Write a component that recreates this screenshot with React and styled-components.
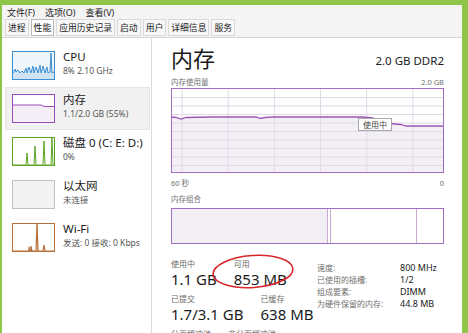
import { styled, createGlobalStyle } from "styled-components";

const GlobalStyle = createGlobalStyle`
  html, body {
    margin: 0;
    padding: 0;
    overflow: hidden;
    background: #8fc64a;
  }
  body {
    font-family: "Noto Sans", "Noto Sans CJK SC", sans-serif;
    color: #1e1e1e;
  }
`;

const MENUS = ["文件(F)", "选项(O)", "查看(V)"];
const TABS = ["进程", "性能", "应用历史记录", "启动", "用户", "详细信息", "服务"];

// little graphs shown in the sidebar
const cpuLine =
  "0,21 2,17 3,20 5,18 7,21 9,19 11,21 13,16 14,21 16,15 18,21 20,14 21,21 23,15 25,21 27,13 28,21 30,14 32,21 34,15 35,21 37,20 38,1 39,21 41,20";
const diskLine =
  "0,27 13,27 14,15 15,27 21,27 22,8 23,27 30,27 31,3 32,27 38,27 39,0 40,27 41,27";
const wifiLine =
  "0,27 16,27 16,23 17,27 18,27 18,22 19,27 23,27 24,0 25,27 30,27 31,21 32,27 41,27";
const memLine = "0,10 28,10 30,11 32,11.5 41,11.5";

const SIDE_ITEMS = [
  { name: "CPU", sub: "8% 2.10 GHz", color: "#3d8fd1", fill: "#eef5fb", kind: "cpu" },
  { name: "内存", sub: "1.1/2.0 GB (55%)", color: "#9a4cb8", fill: "#ffffff", kind: "mem", active: true },
  { name: "磁盘 0 (C: E: D:)", sub: "0%", color: "#5ca524", fill: "#ffffff", kind: "disk" },
  { name: "以太网", sub: "未连接", color: "#c2c2c2", fill: "#f3f3f3", kind: "eth" },
  { name: "Wi-Fi", sub: "发送: 0 接收: 0 Kbps", color: "#b7703a", fill: "#ffffff", kind: "wifi" },
];

const Thumbnail = ({ kind, color }) => (
  <svg width="41" height="27" viewBox="0 0 41 27">
    {kind === "cpu" && (
      <>
        <polygon points={`0,27 ${cpuLine} 41,27`} fill="#cfe3f4" />
        <polyline points={cpuLine} fill="none" stroke={color} strokeWidth="1" />
      </>
    )}
    {kind === "mem" && (
      <>
        <polygon points={`0,27 ${memLine} 41,27`} fill="#f4eef7" />
        <polyline points={memLine} fill="none" stroke={color} strokeWidth="1" />
      </>
    )}
    {kind === "disk" && (
      <polyline points={diskLine} fill="none" stroke={color} strokeWidth="1" />
    )}
    {kind === "wifi" && (
      <>
        <line x1="24" y1="0" x2="24" y2="27" stroke="#e3c3aa" strokeWidth="1" />
        <polyline points={wifiLine} fill="none" stroke={color} strokeWidth="1.2" />
      </>
    )}
  </svg>
);

// memory usage graph, 272 x 85
const usageLine =
  "0,28 4,28.5 9,30 14,28.5 40,28 84,28 88,29.5 93,28.5 100,28 190,28 200,29 212,34 222,35 228,35.5 233,37 272,37";

const UsageGraph = () => {
  const cols = [10, 56, 102, 148, 194, 240];
  const rows = [8.5, 17, 25.5, 34, 42.5, 51, 59.5, 68, 76.5];
  return (
    <svg width="100%" height="100%" viewBox="0 0 270 83" preserveAspectRatio="none">
      <polygon points={`0,83 ${usageLine} 272,83`} fill="#f3f0f5" />
      {cols.map((x) => (
        <line key={x} x1={x} y1="0" x2={x} y2="83" stroke="#e2d8e7" strokeWidth="1" />
      ))}
      {rows.map((y) => (
        <line key={y} x1="0" y1={y} x2="272" y2={y} stroke="#e2d8e7" strokeWidth="1" />
      ))}
      <polyline points={usageLine} fill="none" stroke="#9b58b9" strokeWidth="1.3" />
    </svg>
  );
};

const App = () => {
  return (
    <>
      <GlobalStyle />
      <Frame>
        <Window>
          <MenuBar>
            {MENUS.map((m) => (
              <MenuItem key={m}>{m}</MenuItem>
            ))}
          </MenuBar>
          <TabBar>
            {TABS.map((t) => (
              <Tab key={t} $active={t === "性能"}>
                {t}
              </Tab>
            ))}
          </TabBar>
          <Body>
            <Sidebar>
              {SIDE_ITEMS.map((item) => (
                <SideItem key={item.name} $active={item.active}>
                  <Thumb $color={item.color} $fill={item.fill}>
                    <Thumbnail kind={item.kind} color={item.color} />
                  </Thumb>
                  <SideText>
                    <SideName>{item.name}</SideName>
                    <SideSub>{item.sub}</SideSub>
                  </SideText>
                </SideItem>
              ))}
            </Sidebar>
            <Main>
              <Header>
                <Title>内存</Title>
                <Spec>2.0 GB DDR2</Spec>
              </Header>
              <Caption>
                <span>内存使用量</span>
                <span>2.0 GB</span>
              </Caption>
              <GraphBox>
                <UsageGraph />
                <Tooltip>使用中</Tooltip>
              </GraphBox>
              <Caption $gap={5}>
                <span>60 秒</span>
                <span>0</span>
              </Caption>
              <Caption $gap={5}>
                <span>内存组合</span>
              </Caption>
              <CompBar>
                <Segment $width={155} $fill="#f2eff4" />
                <Segment $width={2} $fill="#ffffff" />
                <Segment $width={85} $fill="#ffffff" />
                <Segment $fill="#ffffff" />
              </CompBar>
              <Stats>
                <LeftStats>
                  <StatRow>
                    <Stat>
                      <StatLabel>使用中</StatLabel>
                      <StatValue>1.1 GB</StatValue>
                    </Stat>
                    <Stat>
                      <StatLabel>可用</StatLabel>
                      <StatValue>853 MB</StatValue>
                    </Stat>
                  </StatRow>
                  <StatRow>
                    <Stat>
                      <StatLabel>已提交</StatLabel>
                      <StatValue>1.7/3.1 GB</StatValue>
                    </Stat>
                    <Stat>
                      <StatLabel>已缓存</StatLabel>
                      <StatValue>638 MB</StatValue>
                    </Stat>
                  </StatRow>
                  <StatRow>
                    <Stat>
                      <StatLabel>分页缓冲池</StatLabel>
                    </Stat>
                    <Stat>
                      <StatLabel>非分页缓冲池</StatLabel>
                    </Stat>
                  </StatRow>
                  <Circle width="84" height="35" viewBox="0 0 84 35">
                    <ellipse cx="42" cy="17.5" rx="40" ry="16" fill="none" stroke="#d8262b" strokeWidth="1.6" />
                  </Circle>
                </LeftStats>
                <InfoGrid>
                  <InfoLabel>速度:</InfoLabel>
                  <InfoValue>800 MHz</InfoValue>
                  <InfoLabel>已使用的插槽:</InfoLabel>
                  <InfoValue>1/2</InfoValue>
                  <InfoLabel>组成要素:</InfoLabel>
                  <InfoValue>DIMM</InfoValue>
                  <InfoLabel>为硬件保留的内存:</InfoLabel>
                  <InfoValue>44.8 MB</InfoValue>
                </InfoGrid>
              </Stats>
            </Main>
          </Body>
        </Window>
      </Frame>
    </>
  );
};

const Frame = styled.div`
  display: flex;
  width: 468px;
  height: 333px;
  padding: 5px 6px 0 2px;
  box-sizing: border-box;
  background: #8fc64a;
`;

const Window = styled.div`
  display: flex;
  flex-direction: column;
  flex: 1;
  overflow: hidden;
  background: #ffffff;
`;

const MenuBar = styled.div`
  display: flex;
  flex-shrink: 0;
  align-items: center;
  gap: 10px;
  height: 14px;
  padding-left: 5px;
  background: #f4f4f4;
  font-size: 9px;
`;

const MenuItem = styled.span`
  color: #222;
`;

const TabBar = styled.div`
  display: flex;
  flex-shrink: 0;
  align-items: flex-end;
  gap: 2px;
  height: 18px;
  padding-left: 3px;
  background: #f4f4f4;
  border-bottom: 1px solid #d6d6d6;
`;

const Tab = styled.div`
  display: flex;
  align-items: center;
  height: 15px;
  padding: 0 2px;
  margin-bottom: 1px;
  border: 1px solid ${({ $active }) => ($active ? "#b9b9b9" : "#dadada")};
  background: ${({ $active }) => ($active ? "#ffffff" : "#f7f7f7")};
  font-size: 8.8px;
  color: #222;
`;

const Body = styled.div`
  display: flex;
  flex: 1;
  min-height: 0;
`;

const Sidebar = styled.div`
  display: flex;
  flex-direction: column;
  width: 150px;
  padding: 6px 0 0 3px;
  box-sizing: border-box;
  border-right: 1px solid #dcdcdc;
`;

const SideItem = styled.div`
  display: flex;
  flex-shrink: 0;
  gap: 8px;
  width: 145px;
  height: 43px;
  padding: 5px 0 0 6px;
  box-sizing: border-box;
  background: ${({ $active }) => ($active ? "#f1f1f1" : "transparent")};
  border: 1px solid ${({ $active }) => ($active ? "#e6e6e6" : "transparent")};
`;

const Thumb = styled.div`
  width: 41px;
  height: 27px;
  margin-top: 1px;
  border: 1px solid ${({ $color }) => $color};
  background: ${({ $fill }) => $fill};
  svg {
    display: block;
  }
`;

const SideText = styled.div`
  display: flex;
  flex-direction: column;
  gap: 1px;
  margin-top: -1px;
`;

const SideName = styled.span`
  font-size: 11.5px;
  line-height: 15px;
  color: #1a1a1a;
`;

const SideSub = styled.span`
  font-size: 8.5px;
  line-height: 11px;
  color: #555;
`;

const Main = styled.div`
  display: flex;
  flex-direction: column;
  flex: 1;
  padding: 4px 18px 0 19px;
  > * {
    flex-shrink: 0;
  }
`;

const Header = styled.div`
  display: flex;
  justify-content: space-between;
  align-items: flex-end;
  height: 30px;
`;

const Title = styled.span`
  font-size: 22px;
  line-height: 28px;
  color: #1a1a1a;
`;

const Spec = styled.span`
  font-size: 11.5px;
  line-height: 16px;
  margin-bottom: 3px;
  color: #1a1a1a;
`;

const Caption = styled.div`
  display: flex;
  justify-content: space-between;
  margin-top: ${({ $gap }) => ($gap ?? 5)}px;
  font-size: 7.5px;
  line-height: 11px;
  color: #707070;
`;

const GraphBox = styled.div`
  position: relative;
  height: 83px;
  border: 1px solid #a26ec2;
  svg {
    display: block;
  }
`;

const Tooltip = styled.div`
  position: absolute;
  left: 186px;
  top: 29px;
  padding: 0 4px;
  height: 11px;
  line-height: 11px;
  border: 1px solid #a8a8a8;
  background: #ffffff;
  font-size: 8px;
  color: #444;
`;

const CompBar = styled.div`
  display: flex;
  height: 34px;
  margin-top: 3px;
  border: 1px solid #a26ec2;
`;

const Segment = styled.div`
  ${({ $width }) => ($width ? `width: ${$width}px;` : "flex: 1;")}
  background: ${({ $fill }) => $fill};
  & + & {
    border-left: 1px solid #c7a9d6;
  }
`;

const Stats = styled.div`
  display: flex;
  margin-top: 14px;
`;

const LeftStats = styled.div`
  position: relative;
  display: flex;
  flex-direction: column;
  gap: 4px;
  width: 146px;
`;

const StatRow = styled.div`
  display: flex;
  gap: 17px;
`;

const Stat = styled.div`
  display: flex;
  flex-direction: column;
`;

const StatLabel = styled.span`
  font-size: 8px;
  line-height: 11px;
  color: #6a6a6a;
`;

const StatValue = styled.span`
  font-size: 15px;
  line-height: 20px;
  color: #1a1a1a;
`;

const Circle = styled.svg`
  position: absolute;
  left: 40px;
  top: -4px;
  transform: rotate(-4deg);
`;

const InfoGrid = styled.div`
  display: grid;
  grid-template-columns: 83px auto;
  grid-auto-rows: 12px;
  align-items: center;
  margin-top: 3px;
`;

const InfoLabel = styled.span`
  font-size: 8px;
  color: #707070;
`;

const InfoValue = styled.span`
  font-size: 9px;
  color: #1a1a1a;
`;

export default App;
